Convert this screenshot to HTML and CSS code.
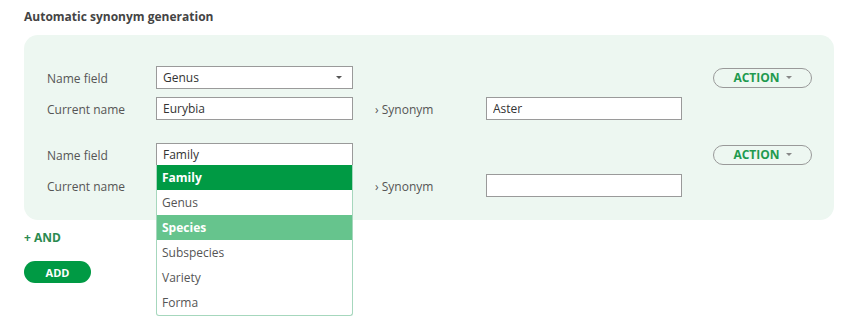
FILE: index.html
```html
<!DOCTYPE html>
<html lang="en">
<head>
    <meta charset="UTF-8">
    <title>Automatic synonym generation</title>
    <link rel="stylesheet" href="styles.css">
</head>
<body>

    <h2 class="title">Automatic synonym generation</h2>

    <div class="panel">
        <div class="group">
            <div class="row">
                <span class="label">Name field</span>
                <div class="select">
                    <span>Genus</span>
                    <span class="caret"></span>
                </div>
                <button class="action">ACTION <span class="caret"></span></button>
            </div>
            <div class="row">
                <span class="label">Current name</span>
                <input class="field" type="text" value="Eurybia">
                <span class="syn-label">› Synonym</span>
                <input class="field" type="text" value="Aster">
            </div>
        </div>

        <div class="group">
            <div class="row">
                <span class="label">Name field</span>
                <div class="select open">
                    <span>Family</span>
                    <ul class="options">
                        <li class="selected">Family</li>
                        <li>Genus</li>
                        <li class="hover">Species</li>
                        <li>Subspecies</li>
                        <li>Variety</li>
                        <li>Forma</li>
                    </ul>
                </div>
                <button class="action">ACTION <span class="caret"></span></button>
            </div>
            <div class="row">
                <span class="label">Current name</span>
                <input class="field" type="text" value="">
                <span class="syn-label">› Synonym</span>
                <input class="field" type="text" value="">
            </div>
        </div>
    </div>

    <div class="and">+ AND</div>
    <button class="add">ADD</button>

</body>
</html>
```

FILE: styles.css
```css
html {
    height: 100%;
}

body {
    margin: 0;
    padding: 0 24px;
    min-height: 100%;
    box-sizing: border-box;
    font-family: "Open Sans", Arial, sans-serif;
    color: #555;
    background: white;
}

.title {
    margin: 8px 0 0;
    font-size: 12px;
    font-weight: bold;
    color: #444;
    line-height: 17px;
}

.panel {
    margin-top: 10px;
    width: 810px;
    box-sizing: border-box;
    background: #edf7f1;
    border-radius: 14px;
    padding: 31px 22px 23px 23px;
}

.group + .group {
    margin-top: 23px;
}

.row {
    display: flex;
    align-items: center;
    height: 23px;
}

.row + .row {
    margin-top: 8px;
}

.label {
    width: 109px;
    font-size: 12px;
    padding-top: 2px;
}

.select, .field {
    width: 197px;
    height: 23px;
    box-sizing: border-box;
    border: 1px solid #9a9a9a;
    background: white;
    font-family: inherit;
    font-size: 12px;
    color: #333;
    padding: 0 6px;
    margin: 0;
}

.select {
    position: relative;
    display: flex;
    align-items: center;
    justify-content: space-between;
    padding-right: 10px;
}

.caret {
    display: inline-block;
    width: 0;
    height: 0;
    border-left: 3px solid transparent;
    border-right: 3px solid transparent;
    border-top: 3px solid #555;
}

.options {
    position: absolute;
    top: 100%;
    left: -1px;
    width: 197px;
    box-sizing: border-box;
    margin: 0;
    padding: 0;
    list-style: none;
    background: white;
    border: 1px solid #a6d7bd;
    border-top: none;
    border-radius: 0 0 3px 3px;
    z-index: 2;
}

.options li {
    height: 25px;
    line-height: 25px;
    padding-left: 5px;
    font-size: 12px;
    color: #555;
}

.options li.selected {
    background: #009a44;
    color: white;
    font-weight: bold;
}

.options li.hover {
    background: #66c48d;
    color: white;
    font-weight: bold;
}

.syn-label {
    margin-left: 22px;
    width: 111px;
    font-size: 12px;
    padding-top: 2px;
}

.field + .syn-label + .field {
    width: 196px;
}

.action {
    margin-left: auto;
    width: 99px;
    height: 20px;
    border: 1px solid #999;
    border-radius: 10px;
    background: transparent;
    color: #1f9a4f;
    font-family: inherit;
    font-weight: bold;
    font-size: 12px;
    padding: 0;
    display: flex;
    align-items: center;
    justify-content: center;
    gap: 6px;
}

.action .caret {
    border-top-color: #888;
}

.and {
    margin-top: 9px;
    font-size: 12px;
    font-weight: bold;
    color: #2b8a50;
}

.add {
    display: block;
    margin-top: 15px;
    width: 67px;
    height: 22px;
    border: none;
    border-radius: 11px;
    background: #009a44;
    color: white;
    font-family: inherit;
    font-weight: bold;
    font-size: 11px;
    padding: 0;
}
```
